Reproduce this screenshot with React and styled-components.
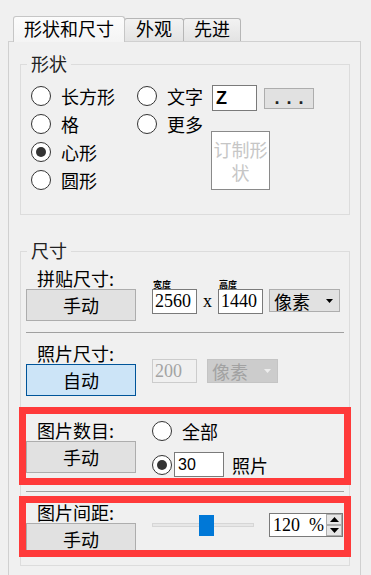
import React from 'react';
import styled, { createGlobalStyle, css } from 'styled-components';

const GlobalStyle = createGlobalStyle`
  html, body { margin: 0; padding: 0; background: #f0f0f0; }
  body {
    width: 371px; height: 575px; overflow: hidden;
    font-family: "Noto Sans CJK SC", "Noto Sans", sans-serif;
    font-size: 18px; color: #000;
  }
  * { box-sizing: border-box; }
`;

const Page = styled.div`
  padding: 16px 0 0 8px;
`;

const TabBar = styled.div`
  display: flex;
  align-items: flex-end;
  height: 25px;
  padding-left: 5px;
`;

const Tab = styled.div`
  position: relative;
  z-index: ${p => (p.$active ? 1 : 0)};
  width: ${p => p.$w}px;
  height: ${p => (p.$active ? 26 : 23)}px;
  margin-bottom: ${p => (p.$active ? -1 : 0)}px;
  margin-left: ${p => (p.$first ? 0 : -1)}px;
  padding-top: ${p => (p.$active ? 2 : 0)}px;
  border: 1px solid ${p => (p.$active ? '#c6c6c6' : '#b6b6b6')};
  border-bottom: none;
  border-radius: 3px 3px 0 0;
  background: ${p =>
    p.$active ? 'linear-gradient(#fcfcfc, #f4f4f4)' : 'linear-gradient(#f2f2f2, #e3e3e3)'};
  line-height: 18px;
  text-align: center;
  white-space: nowrap;
`;

const Panel = styled.div`
  width: 353px;
  border: 1px solid #d0d0d0;
  padding: 0 10px 30px 11px;
`;

const Group = styled.div`
  margin-top: ${p => p.$mt}px;
  border: 1px solid #dcdcdc;
  padding: 0 5px ${p => p.$pb}px;
`;

const Legend = styled.div`
  width: fit-content;
  margin: -12px 0 0 1px;
  padding: 0 4px;
  line-height: 20px;
  background: #f0f0f0;
  color: #222;
`;

const ShapeBody = styled.div`
  display: flex;
  margin-top: 9px;
`;

const Column = styled.div`
  display: flex;
  flex-direction: column;
  width: ${p => (p.$w ? `${p.$w}px` : 'auto')};
  padding-left: ${p => p.$pl || 0}px;
`;

const OptionRow = styled.div`
  display: flex;
  align-items: center;
  height: ${p => p.$h || 28}px;
  width: ${p => (p.$w ? `${p.$w}px` : 'auto')};
  margin-top: ${p => p.$mt || 0}px;
`;

const Radio = styled.span`
  flex: none;
  width: 20px;
  height: 20px;
  border-radius: 50%;
  border: 1px solid #333;
  background: #fff;
  display: flex;
  align-items: center;
  justify-content: center;
  &::after {
    content: '';
    width: 10px;
    height: 10px;
    border-radius: 50%;
    background: ${p => (p.$checked ? '#333' : 'transparent')};
  }
`;

const OptionLabel = styled.span`
  margin-left: ${p => p.$ml ?? 10}px;
  line-height: 20px;
  white-space: nowrap;
`;

const TextBox = styled.div`
  flex: none;
  width: ${p => p.$w}px;
  height: ${p => p.$h}px;
  margin-left: ${p => p.$ml || 0}px;
  margin-top: ${p => p.$mt || 0}px;
  border: 1px solid #7a7a7a;
  background: #fff;
  padding-left: ${p => p.$pl ?? 2}px;
  line-height: ${p => p.$h - 2}px;
  font-family: ${p => (p.$serif ? '"Liberation Serif", serif' : '"Liberation Sans", sans-serif')};
  font-size: ${p => p.$fs || 18}px;
  font-weight: ${p => (p.$bold ? 700 : 400)};
  ${p =>
    p.$disabled &&
    css`
      border-color: #cccccc;
      background: #f0f0f0;
      color: #a3a3a3;
    `}
`;

const DotsButton = styled.div`
  flex: none;
  width: 50px;
  height: 21px;
  margin-left: 7px;
  margin-top: 4px;
  background: #e1e1e1;
  border: 1px solid #adadad;
  font-family: "Liberation Sans", sans-serif;
  font-size: 18px;
  font-weight: 700;
  line-height: 19px;
  letter-spacing: 7px;
  text-align: center;
  padding-left: 7px;
  color: #222;
`;

const SplitRow = styled.div`
  display: flex;
  align-items: flex-start;
`;

const CustomButton = styled.div`
  width: 59px;
  height: 59px;
  margin-top: 21px;
  border: 1px solid #8a8a8a;
  background: #fff;
  color: #c6c6c6;
  line-height: 23px;
  text-align: center;
  display: flex;
  align-items: center;
  justify-content: center;
`;

const Section = styled.div`
  position: relative;
  display: flex;
  margin-top: ${p => p.$mt}px;
  ${p =>
    p.$hl &&
    css`
      &::after {
        content: '';
        position: absolute;
        top: ${p.$hl[0]}px;
        right: ${p.$hl[1]}px;
        bottom: ${p.$hl[2]}px;
        left: ${p.$hl[3]}px;
        border: 7px solid #ff3a3a;
        pointer-events: none;
      }
    `}
`;

const LeftCol = styled.div`
  flex: none;
  width: 110px;
  display: flex;
  flex-direction: column;
`;

const SectionLabel = styled.div`
  height: ${p => p.$h || 21}px;
  line-height: ${p => p.$h || 21}px;
  padding-left: 11px;
  white-space: nowrap;
`;

const ModeButton = styled.div`
  height: 32px;
  border: 1px solid ${p => (p.$active ? '#005499' : '#adadad')};
  background: ${p => (p.$active ? '#cce4f7' : '#e1e1e1')};
  line-height: 30px;
  text-align: center;
`;

const RightCol = styled.div`
  margin-left: 16px;
  padding-top: ${p => p.$pt}px;
  display: flex;
  flex-direction: column;
`;

const Row = styled.div`
  display: flex;
  align-items: ${p => p.$align || 'center'};
  height: ${p => (p.$h ? `${p.$h}px` : 'auto')};
  margin-top: ${p => p.$mt || 0}px;
`;

const Field = styled.div`
  display: flex;
  flex-direction: column;
`;

const TinyLabel = styled.div`
  height: 9px;
  font-size: 9px;
  line-height: 9px;
  font-weight: 700;
  padding-left: 1px;
  white-space: nowrap;
`;

const Times = styled.span`
  width: 21px;
  text-align: center;
  font-family: "Liberation Serif", serif;
  font-size: 18px;
  line-height: 25px;
`;

const Select = styled.div`
  flex: none;
  width: 71px;
  height: ${p => p.$h}px;
  margin-left: ${p => p.$ml}px;
  margin-bottom: ${p => p.$mb || 0}px;
  border: 1px solid ${p => (p.$disabled ? '#c4c4c4' : '#adadad')};
  background: ${p => (p.$disabled ? '#cccccc' : '#e1e1e1')};
  color: ${p => (p.$disabled ? '#a2a2a2' : '#000')};
  display: flex;
  align-items: center;
  justify-content: space-between;
  padding: 0 6px 0 4px;
  line-height: 20px;
`;

const Separator = styled.div`
  height: 1px;
  background: #a0a0a0;
  margin-top: ${p => p.$mt}px;
`;

const Slider = styled.div`
  position: relative;
  width: 102px;
  height: 21px;
  display: flex;
  align-items: center;
`;

const Track = styled.div`
  width: 100%;
  height: 4px;
  background: #e7e7e7;
  border: 1px solid #d6d6d6;
`;

const Thumb = styled.div`
  position: absolute;
  top: 0;
  width: 15px;
  height: 21px;
  background: #0078d7;
`;

const SpinBox = styled.div`
  width: 74px;
  height: 24px;
  margin-left: 15px;
  border: 1px solid #7a7a7a;
  background: #fff;
  display: flex;
`;

const SpinText = styled.div`
  flex: 1;
  padding-left: 3px;
  font-family: "Liberation Serif", serif;
  font-size: 18px;
  line-height: 22px;
  white-space: pre;
`;

const Spinner = styled.div`
  width: 16px;
  display: flex;
  flex-direction: column;
`;

const SpinBtn = styled.div`
  width: 16px;
  height: 11px;
  border: 1px solid #adadad;
  background: #e6e6e6;
  display: flex;
  align-items: center;
  justify-content: center;
`;

const Arrow = ({ up, color = '#000', w = 7, h = 4 }) => (
  <svg width={w} height={h} viewBox={`0 0 ${w} ${h}`}>
    <polygon
      points={up ? `0,${h} ${w},${h} ${w / 2},0` : `0,0 ${w},0 ${w / 2},${h}`}
      fill={color}
    />
  </svg>
);

export default function App() {
  return (
    <Page>
      <GlobalStyle />
      <TabBar>
        <Tab $active $first $w={112}>形状和尺寸</Tab>
        <Tab $w={60}>外观</Tab>
        <Tab $w={58}>先进</Tab>
      </TabBar>
      <Panel>
        <Group $mt={22} $pb={20}>
          <Legend>形状</Legend>
          <ShapeBody>
            <Column $w={111} $pl={5}>
              <OptionRow>
                <Radio />
                <OptionLabel>长方形</OptionLabel>
              </OptionRow>
              <OptionRow>
                <Radio />
                <OptionLabel>格</OptionLabel>
              </OptionRow>
              <OptionRow>
                <Radio $checked />
                <OptionLabel>心形</OptionLabel>
              </OptionRow>
              <OptionRow>
                <Radio />
                <OptionLabel>圆形</OptionLabel>
              </OptionRow>
            </Column>
            <Column>
              <OptionRow>
                <Radio />
                <OptionLabel>文字</OptionLabel>
                <TextBox $w={45} $h={26} $ml={9} $mt={4} $pl={3} $bold>Z</TextBox>
                <DotsButton>...</DotsButton>
              </OptionRow>
              <SplitRow>
                <OptionRow $w={74}>
                  <Radio />
                  <OptionLabel>更多</OptionLabel>
                </OptionRow>
                <CustomButton>订制形状</CustomButton>
              </SplitRow>
            </Column>
          </ShapeBody>
        </Group>

        <Group $mt={36} $pb={10}>
          <Legend>尺寸</Legend>

          <Section $mt={8}>
            <LeftCol>
              <SectionLabel>拼贴尺寸:</SectionLabel>
              <ModeButton>手动</ModeButton>
            </LeftCol>
            <RightCol $pt={12}>
              <Row $align="flex-end">
                <Field>
                  <TinyLabel>宽度</TinyLabel>
                  <TextBox $w={45} $h={25} $serif>2560</TextBox>
                </Field>
                <Times>x</Times>
                <Field>
                  <TinyLabel>高度</TinyLabel>
                  <TextBox $w={45} $h={25} $serif>1440</TextBox>
                </Field>
                <Select $h={23} $ml={6} $mb={2}>
                  <span>像素</span>
                  <Arrow />
                </Select>
              </Row>
            </RightCol>
          </Section>

          <Separator $mt={11} />

          <Section $mt={10}>
            <LeftCol>
              <SectionLabel>照片尺寸:</SectionLabel>
              <ModeButton $active>自动</ModeButton>
            </LeftCol>
            <RightCol $pt={16}>
              <Row>
                <TextBox $w={45} $h={24} $serif $disabled>200</TextBox>
                <Select $h={24} $ml={10} $disabled>
                  <span>像素</span>
                  <Arrow color="#ededed" />
                </Select>
              </Row>
            </RightCol>
          </Section>

          <Section $mt={23} $hl={[-12, -7, -8, -7]}>
            <LeftCol>
              <SectionLabel $h={22}>图片数目:</SectionLabel>
              <ModeButton>手动</ModeButton>
            </LeftCol>
            <RightCol $pt={2}>
              <Row $h={20}>
                <Radio />
                <OptionLabel>全部</OptionLabel>
              </Row>
              <Row $h={25} $mt={11}>
                <Radio $checked />
                <TextBox $w={50} $h={25} $ml={2} $fs={16} $pl={3}>30</TextBox>
                <OptionLabel $ml={8}>照片</OptionLabel>
              </Row>
            </RightCol>
          </Section>

          <Separator $mt={14} />

          <Section $mt={10} $hl={[-6, -7, -2, -7]}>
            <LeftCol>
              <SectionLabel>图片间距:</SectionLabel>
              <ModeButton>手动</ModeButton>
            </LeftCol>
            <RightCol $pt={11}>
              <Row $h={24}>
                <Slider>
                  <Track />
                  <Thumb style={{ left: 47 }} />
                </Slider>
                <SpinBox>
                  <SpinText>120  %</SpinText>
                  <Spinner>
                    <SpinBtn>
                      <Arrow up w={9} h={5} />
                    </SpinBtn>
                    <SpinBtn>
                      <Arrow w={9} h={5} />
                    </SpinBtn>
                  </Spinner>
                </SpinBox>
              </Row>
            </RightCol>
          </Section>
        </Group>
      </Panel>
    </Page>
  );
}
